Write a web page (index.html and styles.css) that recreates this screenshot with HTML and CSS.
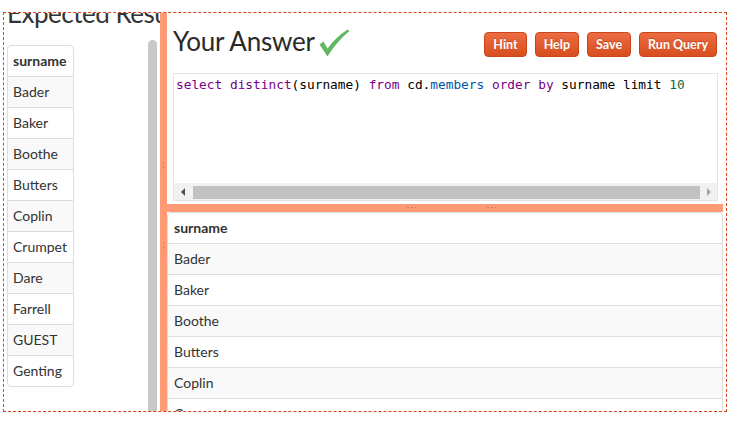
FILE: index.html
```html
<!DOCTYPE html>
<html>
<head>
<meta charset="utf-8">
<link rel="stylesheet" href="styles.css">
</head>
<body>
<div class="frame">
  <section class="left">
    <h3 class="heading">Expected Results</h3>
    <table class="grid small">
      <thead><tr><th>surname</th></tr></thead>
      <tbody>
        <tr><td>Bader</td></tr>
        <tr><td>Baker</td></tr>
        <tr><td>Boothe</td></tr>
        <tr><td>Butters</td></tr>
        <tr><td>Coplin</td></tr>
        <tr><td>Crumpet</td></tr>
        <tr><td>Dare</td></tr>
        <tr><td>Farrell</td></tr>
        <tr><td>GUEST</td></tr>
        <tr><td>Genting</td></tr>
      </tbody>
    </table>
    <div class="scroll-thumb"></div>
  </section>
  <div class="vsplit"><span class="vgrip"></span><span class="vgrip"></span></div>
  <section class="right">
    <div class="top">
      <div class="toolbar">
        <h3 class="title"><span>Your Answer</span><svg class="check" viewBox="0 0 31 28" width="31" height="28"><path d="M0.5 15.5 L4.5 12.5 L8.5 19.5 Q17 8 28.5 0.5 L30.5 2 Q18 12 8.5 27.5 Z" fill="#62b862"/></svg></h3>
        <div class="buttons">
          <button class="btn">Hint</button>
          <button class="btn">Help</button>
          <button class="btn">Save</button>
          <button class="btn">Run Query</button>
        </div>
      </div>
      <div class="editor">
        <pre class="code"><span class="kw">select</span> <span class="kw">distinct</span>(surname) <span class="kw">from</span> cd.<span class="var">members</span> <span class="kw">order</span> <span class="kw">by</span> surname limit <span class="num">10</span></pre>
        <div class="hscroll">
          <div class="arrow-box"><span class="arrow-left"></span></div>
          <div class="hthumb"></div>
          <div class="arrow-box"><span class="arrow-right"></span></div>
        </div>
      </div>
    </div>
    <div class="hsplit"><span class="hgrip"></span><span class="hgrip"></span></div>
    <div class="results">
      <table class="grid wide">
        <thead><tr><th>surname</th></tr></thead>
        <tbody>
          <tr><td>Bader</td></tr>
          <tr><td>Baker</td></tr>
          <tr><td>Boothe</td></tr>
          <tr><td>Butters</td></tr>
          <tr><td>Coplin</td></tr>
          <tr><td>Crumpet</td></tr>
          <tr><td>Dare</td></tr>
        </tbody>
      </table>
    </div>
  </section>
</div>
</body>
</html>
```

FILE: styles.css
```css
* { box-sizing: border-box; }
html, body { margin: 0; padding: 0; background: #fff; }
body { font-family: Lato, "Noto Sans", sans-serif; color: #333; }

.frame {
  display: flex;
  width: 724px;
  height: 400px;
  margin: 12px 0 0 3px;
  border: 1px dashed #d9461a;
  overflow: hidden;
}

.left {
  position: relative;
  width: 156px;
  flex: none;
  overflow: hidden;
  padding-left: 3px;
}
.heading {
  margin: -15px 0 0;
  font-size: 26px;
  font-weight: 400;
  line-height: 30px;
  letter-spacing: -0.5px;
  white-space: nowrap;
}
.scroll-thumb {
  position: absolute;
  right: 3px;
  top: 27px;
  bottom: -6px;
  width: 9px;
  border-radius: 5px;
  background: #c8c8c8;
}

.grid {
  border-collapse: separate;
  border-spacing: 0;
  border: 1px solid #ddd;
  border-radius: 4px;
  font-size: 14px;
}
.grid th, .grid td {
  padding: 5px 4px 5px 5px;
  line-height: 20px;
  text-align: left;
}
.grid th { font-weight: 700; }
.grid td { border-top: 1px solid #ddd; }
.grid tbody tr:nth-child(odd) td { background: #f9f9f9; }
.small { width: 67px; margin-top: 17px; }
.wide { width: 556px; }
.wide th, .wide td { padding-left: 6px; }

.vsplit {
  width: 7px;
  flex: none;
  background: #ff9a74;
  display: flex;
  flex-direction: column;
  align-items: center;
  padding-top: 149px;
  gap: 71px;
}
.vgrip {
  width: 1px;
  height: 9px;
  background: repeating-linear-gradient(to bottom, #c9836a 0 2px, transparent 2px 4px);
}

.right {
  width: 556px;
  flex: none;
  display: flex;
  flex-direction: column;
}
.top { padding: 13px 5px 3px 6px; }
.toolbar {
  display: flex;
  justify-content: space-between;
  align-items: flex-start;
  height: 31px;
}
.title {
  margin: 0;
  font-size: 26px;
  font-weight: 400;
  line-height: 30px;
  letter-spacing: -0.2px;
  display: flex;
  align-items: flex-start;
  color: #2a2a2a;
}
.check { margin: 3px 0 0 4px; }
.buttons { display: flex; gap: 8px; margin-top: 6px; margin-right: 1px; }
.btn {
  height: 25px;
  padding: 0 8px;
  font-family: Lato, "Noto Sans", sans-serif;
  font-size: 12.5px;
  font-weight: 700;
  color: #fff;
  border: 1px solid #c9461b;
  border-radius: 4px;
  background: linear-gradient(#ec6c43, #d84e1d);
  text-shadow: 0 -1px 0 rgba(0,0,0,0.2);
}

.editor {
  margin-top: 16px;
  height: 128px;
  border: 1px solid #e5e5e5;
  display: flex;
  flex-direction: column;
}
.code {
  flex: 1;
  margin: 0;
  padding: 2px 2px 0;
  font-family: "DejaVu Sans Mono", monospace;
  font-size: 12.8px;
  line-height: 17px;
  color: #000;
}
.kw { color: #770088; }
.var { color: #0055aa; }
.num { color: #116644; }
.hscroll {
  height: 17px;
  flex: none;
  background: #f1f1f1;
  display: flex;
}
.arrow-box {
  width: 17px;
  display: flex;
  align-items: center;
  justify-content: center;
}
.arrow-left, .arrow-right {
  width: 0; height: 0;
  border-top: 4px solid transparent;
  border-bottom: 4px solid transparent;
}
.arrow-left { border-right: 4px solid #505050; }
.arrow-right { border-left: 4px solid #a3a3a3; }
.hthumb {
  flex: 1;
  margin: 3px 0 1px 2px;
  background: #c1c1c1;
}

.hsplit {
  height: 8px;
  flex: none;
  background: #ff9a74;
  display: flex;
  padding: 3px 0 0 240px;
  gap: 71px;
}
.hgrip {
  width: 9px;
  height: 1px;
  background: repeating-linear-gradient(to right, #c9836a 0 2px, transparent 2px 4px);
}
.results { flex: 1; overflow: hidden; }
```
